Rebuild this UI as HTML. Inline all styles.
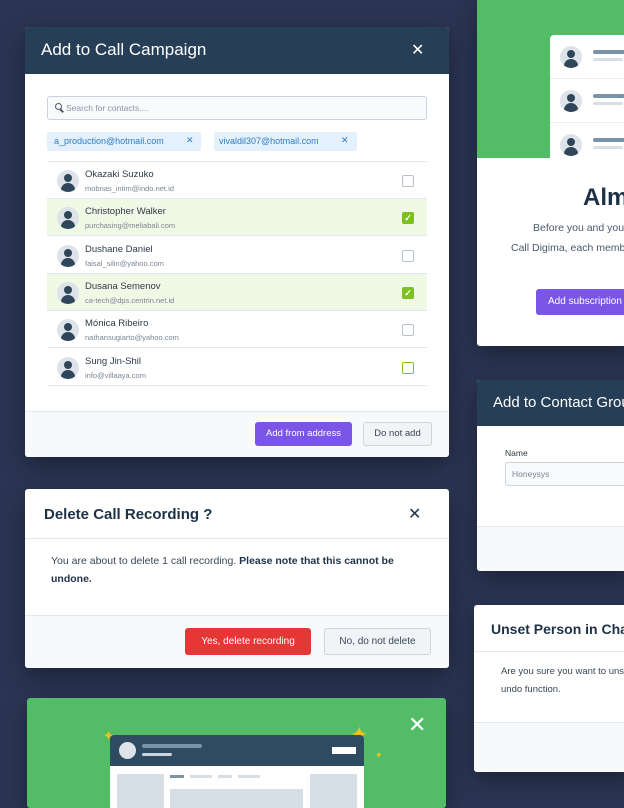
<!DOCTYPE html>
<html><head><meta charset="utf-8"><style>
*{box-sizing:border-box;margin:0;padding:0}
body{width:624px;height:798px;overflow:hidden;background:#2b3553;font-family:"Liberation Sans",sans-serif;position:relative}
.a{position:absolute}
.card{position:absolute;background:#fff;border-radius:3px;overflow:hidden;box-shadow:0 8px 24px rgba(0,0,0,.35)}
.row{position:absolute;left:22px;width:380px;height:37px;border-bottom:1px solid #e3e8ee}
.row.sel{background:#f0f8e6}
.av{position:absolute;left:10px;top:8px;width:22px;height:22px;border-radius:50%;background:#dde3e9;overflow:hidden}
.av:before{content:"";position:absolute;left:7px;top:4px;width:8px;height:8px;border-radius:50%;background:#2f4559}
.av:after{content:"";position:absolute;left:4px;top:13px;width:14px;height:12px;border-radius:7px 7px 0 0;background:#2f4559}
.nm{position:absolute;left:38px;top:7px;font-size:9.5px;color:#2d3a48}
.em{position:absolute;left:38px;top:22px;font-size:7.5px;color:#7a8693}
.cb{position:absolute;left:355px;top:13px;width:12px;height:12px;border:1.5px solid #b8c2cc;border-radius:2px;background:#fff}
.cb.on{background:#7cc11f;border-color:#7cc11f;color:#fff;font-size:9px;line-height:10px;text-align:center;font-weight:bold}
.btn{position:absolute;border-radius:3px;font-size:9.5px;text-align:center}
</style></head><body>

<div class="card" style="left:25px;top:27px;width:424px;height:430px">
 <div class="a" style="left:0;top:0;width:424px;height:47px;background:#263f56"></div>
 <div class="a" style="left:16px;top:13px;font-size:17px;color:#fff">Add to Call Campaign</div>
 <div class="a" style="left:386px;top:13px;font-size:16px;color:#fff">✕</div>
 <div class="a" style="left:22px;top:69px;width:380px;height:24px;border:1px solid #c9d3dd;border-radius:3px;background:#f8fafc"></div>
 <div class="a" style="left:30px;top:76px;width:7px;height:7px;border:1.5px solid #4a5867;border-radius:50%"></div>
 <div class="a" style="left:35px;top:83px;width:4px;height:1.5px;background:#4a5867;transform:rotate(45deg)"></div>
 <div class="a" style="left:41px;top:76px;font-size:8.5px;color:#8a96a3">Search for contacts....</div>
 <div class="a" style="left:22px;top:105px;width:154px;height:19px;background:#e4f1fd;border-radius:2px"></div>
 <div class="a" style="left:29px;top:109px;font-size:9px;color:#2f7cc2">a_production@hotmail.com</div>
 <div class="a" style="left:161px;top:108px;font-size:9px;color:#2f7cc2">✕</div>
 <div class="a" style="left:189px;top:105px;width:143px;height:19px;background:#e4f1fd;border-radius:2px"></div>
 <div class="a" style="left:194px;top:109px;font-size:9px;color:#2f7cc2">vivaldil307@hotmail.com</div>
 <div class="a" style="left:316px;top:108px;font-size:9px;color:#2f7cc2">✕</div>
 <div class="a" style="left:22px;top:134px;width:380px;height:1px;background:#e3e8ee"></div>
 <div class="row" style="top:135px"><div class="av"></div><div class="nm">Okazaki Suzuko</div><div class="em">mobnas_intim@indo.net.id</div><div class="cb"></div></div>
 <div class="row sel" style="top:172px"><div class="av"></div><div class="nm">Christopher Walker</div><div class="em">purchasing@meliabali.com</div><div class="cb on">✓</div></div>
 <div class="row" style="top:210px"><div class="av"></div><div class="nm">Dushane Daniel</div><div class="em">faisal_silin@yahoo.com</div><div class="cb"></div></div>
 <div class="row sel" style="top:247px"><div class="av"></div><div class="nm">Dusana Semenov</div><div class="em">ca-tech@dps.centrin.net.id</div><div class="cb on">✓</div></div>
 <div class="row" style="top:284px"><div class="av"></div><div class="nm">Mónica Ribeiro</div><div class="em">nathansugiarto@yahoo.com</div><div class="cb"></div></div>
 <div class="row" style="top:322px"><div class="av"></div><div class="nm">Sung Jin-Shil</div><div class="em">info@villaaya.com</div><div class="cb" style="border-color:#7cc11f"></div></div>
 <div class="a" style="left:0;top:384px;width:424px;height:46px;background:#f7f9fb;border-top:1px solid #e3e8ee"></div>
 <div class="btn" style="left:230px;top:395px;width:97px;height:24px;background:#7a55e6;color:#fff;line-height:24px">Add from address</div>
 <div class="btn" style="left:338px;top:395px;width:69px;height:24px;background:#f1f4f7;border:1px solid #cdd5dd;color:#3a4755;line-height:22px">Do not add</div>
</div>

<div class="card" style="left:25px;top:489px;width:424px;height:179px">
 <div class="a" style="left:19px;top:17px;font-size:15px;font-weight:bold;color:#1e3247">Delete Call Recording ?</div>
 <div class="a" style="left:383px;top:15px;font-size:16px;color:#1e3247">✕</div>
 <div class="a" style="left:0;top:49px;width:424px;height:1px;background:#e3e8ee"></div>
 <div class="a" style="left:26px;top:63px;width:350px;font-size:10.5px;line-height:18px;color:#3a4755">You are about to delete 1 call recording. <b style="color:#1e3247">Please note that this cannot be undone.</b></div>
 <div class="a" style="left:0;top:126px;width:424px;height:53px;background:#f7f9fb;border-top:1px solid #e3e8ee"></div>
 <div class="btn" style="left:160px;top:139px;width:126px;height:27px;background:#e63737;color:#fff;line-height:27px;font-size:10px">Yes, delete recording</div>
 <div class="btn" style="left:299px;top:139px;width:107px;height:27px;background:#f1f4f7;border:1px solid #cdd5dd;color:#3a4755;line-height:25px;font-size:10px">No, do not delete</div>
</div>

<div class="card" style="left:27px;top:698px;width:419px;height:110px;background:#52bd66">
 <div class="a" style="left:381px;top:14px;font-size:22px;color:#fff">✕</div>
 <div class="a" style="left:76px;top:30px;font-size:13px;color:#f7c21b">✦</div>
 <div class="a" style="left:323px;top:24px;font-size:22px;color:#f7c21b">✦</div>
 <div class="a" style="left:348px;top:52px;font-size:9px;color:#f7c21b">✦</div>
 <div class="a" style="left:83px;top:37px;width:254px;height:80px;background:#fff;border-radius:4px;overflow:hidden">
  <div class="a" style="left:0;top:0;width:254px;height:31px;background:#2f4b62"></div>
  <div class="a" style="left:9px;top:7px;width:17px;height:17px;border-radius:50%;background:#dde3e9"></div>
  <div class="a" style="left:32px;top:9px;width:60px;height:4px;border-radius:2px;background:#7b93a7"></div>
  <div class="a" style="left:32px;top:18px;width:30px;height:3px;border-radius:2px;background:#c9d5df"></div>
  <div class="a" style="left:222px;top:12px;width:24px;height:7px;background:#fff"></div>
  <div class="a" style="left:7px;top:39px;width:47px;height:40px;background:#d6dfe6"></div>
  <div class="a" style="left:200px;top:39px;width:47px;height:40px;background:#d6dfe6"></div>
  <div class="a" style="left:60px;top:40px;width:14px;height:3px;background:#7b93a7"></div>
  <div class="a" style="left:80px;top:40px;width:22px;height:3px;background:#d6dfe6"></div>
  <div class="a" style="left:108px;top:40px;width:14px;height:3px;background:#d6dfe6"></div>
  <div class="a" style="left:128px;top:40px;width:22px;height:3px;background:#d6dfe6"></div>
  <div class="a" style="left:60px;top:54px;width:133px;height:20px;background:#d6dfe6"></div>
 </div>
</div>

<div class="card" style="left:477px;top:-5px;width:160px;height:351px">
 <div class="a" style="left:0;top:0;width:160px;height:163px;background:#52bd66"></div>
 <div class="a" style="left:73px;top:40px;width:90px;height:123px;background:#fff;border-radius:4px 0 0 0">
  <div class="av" style="top:11px"></div>
  <div class="a" style="left:43px;top:15px;width:40px;height:4px;background:#7b93a7;border-radius:2px"></div>
  <div class="a" style="left:43px;top:23px;width:30px;height:3px;background:#d6dfe6;border-radius:2px"></div>
  <div class="a" style="left:0;top:43px;width:90px;height:1px;background:#e8edf1"></div>
  <div class="av" style="top:55px"></div>
  <div class="a" style="left:43px;top:59px;width:40px;height:4px;background:#7b93a7;border-radius:2px"></div>
  <div class="a" style="left:43px;top:67px;width:30px;height:3px;background:#d6dfe6;border-radius:2px"></div>
  <div class="a" style="left:0;top:87px;width:90px;height:1px;background:#e8edf1"></div>
  <div class="av" style="top:99px"></div>
  <div class="a" style="left:43px;top:103px;width:40px;height:4px;background:#7b93a7;border-radius:2px"></div>
  <div class="a" style="left:43px;top:111px;width:30px;height:3px;background:#d6dfe6;border-radius:2px"></div>
 </div>
 <div class="a" style="left:106px;top:189px;font-size:24px;font-weight:bold;color:#1e3247;white-space:nowrap">Almost</div>
 <div class="a" style="left:56px;top:227px;font-size:10.5px;color:#4a5a6b;white-space:nowrap">Before you and your</div>
 <div class="a" style="left:34px;top:247px;font-size:10.5px;color:#4a5a6b;white-space:nowrap">Call Digima, each member</div>
 <div class="btn" style="left:59px;top:294px;width:110px;height:26px;background:#7a55e6;color:#fff;line-height:26px;text-align:left;padding-left:12px;font-size:10px;white-space:nowrap">Add subscription</div>
</div>

<div class="card" style="left:477px;top:380px;width:160px;height:191px">
 <div class="a" style="left:0;top:0;width:160px;height:46px;background:#263f56"></div>
 <div class="a" style="left:16px;top:14px;font-size:15px;color:#fff;white-space:nowrap">Add to Contact Group</div>
 <div class="a" style="left:28px;top:68px;font-size:8.5px;color:#2d3a48">Name</div>
 <div class="a" style="left:28px;top:82px;width:140px;height:24px;border:1px solid #cdd5dd;border-radius:3px;background:#f8fafc"></div>
 <div class="a" style="left:35px;top:89px;font-size:8.5px;color:#7a8693">Honeysys</div>
 <div class="a" style="left:0;top:146px;width:160px;height:45px;background:#f7f9fb;border-top:1px solid #e3e8ee"></div>
</div>

<div class="card" style="left:474px;top:605px;width:160px;height:167px">
 <div class="a" style="left:17px;top:16px;font-size:14px;font-weight:bold;color:#1e3247;white-space:nowrap">Unset Person in Charge</div>
 <div class="a" style="left:0;top:46px;width:160px;height:1px;background:#e3e8ee"></div>
 <div class="a" style="left:27px;top:61px;font-size:9.5px;color:#3a4755;white-space:nowrap">Are you sure you want to unset</div>
 <div class="a" style="left:27px;top:79px;font-size:9.5px;color:#3a4755">undo function.</div>
 <div class="a" style="left:0;top:117px;width:160px;height:50px;background:#f7f9fb;border-top:1px solid #e3e8ee"></div>
</div>
</body></html>
